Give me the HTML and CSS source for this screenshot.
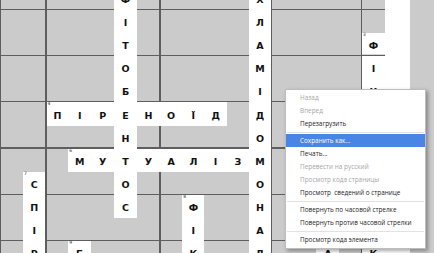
FILE: index.html
```html
<!DOCTYPE html>
<html lang="uk">
<head>
    <meta charset="UTF-8">
    <meta name="viewport" content="width=device-width, initial-scale=1.0">
    <title>Кросворд</title>
    <link rel="stylesheet" href="styles.css">
</head>
<body>

    <div class="page">
        <div class="board">
            <!-- row 0 -->
            <span></span><span></span><span></span><span></span><span></span><span class="w">Ф</span><span></span><span></span><span></span><span></span><span></span><span class="w">Х</span><span></span><span></span><span></span><span></span><span></span>
            <!-- row 1 -->
            <span></span><span></span><span></span><span></span><span></span><span class="w">І</span><span></span><span></span><span></span><span></span><span></span><span class="w">Л</span><span></span><span></span><span></span><span></span><span></span>
            <!-- row 2 -->
            <span></span><span></span><span></span><span></span><span></span><span class="w">Т</span><span></span><span></span><span></span><span></span><span></span><span class="w">А</span><span></span><span></span><span></span><span></span><span class="w rule-b"><b class="n">3</b>Ф</span>
            <!-- row 3 -->
            <span></span><span></span><span></span><span></span><span></span><span class="w">О</span><span></span><span></span><span></span><span></span><span></span><span class="w">М</span><span></span><span></span><span></span><span></span><span class="w">І</span>
            <!-- row 4 -->
            <span></span><span></span><span></span><span></span><span></span><span class="w">Б</span><span></span><span></span><span></span><span></span><span></span><span class="w">І</span><span></span><span></span><span></span><span></span><span class="w">К</span>
            <!-- row 5 -->
            <span></span><span></span><span class="w edge-l"><b class="n">4</b>П</span><span class="w">І</span><span class="w">Р</span><span class="w">Е</span><span class="w">Н</span><span class="w">О</span><span class="w">Ї</span><span class="w">Д</span><span></span><span class="w">Д</span><span></span><span></span><span></span><span></span><span class="w"></span>
            <!-- row 6 -->
            <span></span><span></span><span></span><span></span><span></span><span class="w">Н</span><span></span><span></span><span></span><span></span><span></span><span class="w">О</span><span></span><span></span><span></span><span></span><span class="w"></span>
            <!-- row 7 -->
            <span></span><span></span><span></span><span class="w"><b class="n">6</b>М</span><span class="w">У</span><span class="w">Т</span><span class="w">У</span><span class="w">А</span><span class="w">Л</span><span class="w">І</span><span class="w">З</span><span class="w">М</span><span></span><span></span><span></span><span></span><span class="w"></span>
            <!-- row 8 -->
            <span></span><span class="w"><b class="n">7</b>С</span><span></span><span></span><span></span><span class="w">О</span><span></span><span></span><span></span><span></span><span></span><span class="w">О</span><span></span><span></span><span></span><span></span><span class="w"></span>
            <!-- row 9 -->
            <span></span><span class="w">П</span><span></span><span></span><span></span><span class="w">С</span><span></span><span></span><span class="w"><b class="n">8</b>Ф</span><span></span><span></span><span class="w">Н</span><span></span><span></span><span></span><span></span><span class="w"></span>
            <!-- row 10 -->
            <span></span><span class="w">І</span><span></span><span></span><span></span><span></span><span></span><span></span><span class="w">І</span><span></span><span></span><span class="w">А</span><span></span><span></span><span></span><span></span><span class="w"></span>
            <!-- row 11 -->
            <span></span><span class="w">Р</span><span></span><span class="w"><b class="n">9</b>Б</span><span></span><span></span><span></span><span></span><span class="w">К</span><span></span><span></span><span class="w">Д</span><span></span><span></span><span class="w">А</span><span></span><span class="w">К</span>
        </div>
        <div class="strip"></div>
    </div>

    <div class="menu">
        <div class="item off">Назад</div>
        <div class="item off">Вперед</div>
        <div class="item">Перезагрузить</div>
        <div class="sep"></div>
        <div class="item on">Сохранить как...</div>
        <div class="item">Печать...</div>
        <div class="item off">Перевести на русский</div>
        <div class="item off">Просмотр кода страницы</div>
        <div class="item">Просмотр&nbsp; сведений о странице</div>
        <div class="sep"></div>
        <div class="item">Повернуть по часовой стрелке</div>
        <div class="item">Повернуть против часовой стрелки</div>
        <div class="sep"></div>
        <div class="item">Просмотр кода элемента</div>
    </div>

</body>
</html>
```

FILE: styles.css
```css
body {
    margin: 0;
    background: #cbcbcb;
    font-family: "DejaVu Sans", sans-serif;
    overflow: hidden;
}

.page {
    display: flex;
    height: 253px;
    overflow: hidden;
}

/* crossword grid, dark rules every two rows and at a few columns */
.board {
    width: 385px;
    flex: none;
    margin-top: -13px;
    display: grid;
    grid-template-columns: 23px 22.3px repeat(5, 22.94px) repeat(4, 22.25px) 22px repeat(4, 22.75px) 23px;
    grid-auto-rows: 23.1px;
    align-content: start;
    background-color: #cbcbcb;
    background-image:
        linear-gradient(to right,
            #5e5e5e 0 1.2px, transparent 1.2px 45.3px,
            #5e5e5e 45.3px 46.6px, transparent 46.6px 159.4px,
            #5e5e5e 159.4px 160.7px, transparent 160.7px 271px,
            #5e5e5e 271px 272.3px, transparent 272.3px 360.7px,
            #5e5e5e 360.7px 362px, transparent 362px),
        repeating-linear-gradient(to bottom,
            transparent 0 21.8px, #5e5e5e 21.8px 23.1px, transparent 23.1px 46.2px);
}

.w {
    position: relative;
    display: flex;
    align-items: center;
    justify-content: center;
    padding-top: 2px;
    background: #fff;
    color: #111;
    font-size: 9.5px;
    font-weight: bold;
}

.edge-l {
    margin-left: 1.3px;
}

.rule-b {
    box-shadow: inset 0 -1.3px 0 #5e5e5e;
}

.n {
    position: absolute;
    top: 0;
    left: 1px;
    font-size: 4.5px;
    font-weight: normal;
    line-height: 1;
    color: #333;
}

.strip {
    width: 25px;
    flex: none;
    background: #fff;
}

/* context menu */
.menu {
    position: absolute;
    left: 285px;
    top: 89px;
    width: 139px;
    padding: 1px 0 2px;
    background: #fff;
    border: 1px solid #bdbdbd;
    box-shadow: 2px 2px 4px rgba(0, 0, 0, 0.35);
    font-family: "Open Sans", sans-serif;
    font-size: 6.4px;
    color: #1c1c1c;
}

.item {
    height: 13px;
    line-height: 13px;
    padding-left: 14px;
    white-space: nowrap;
}

.item.off {
    color: #a6a6a6;
}

.item.on {
    background: #4a84e4;
    color: #fff;
}

.sep {
    height: 1px;
    margin: 1.5px 1px;
    background: #e2e2e2;
}
```
